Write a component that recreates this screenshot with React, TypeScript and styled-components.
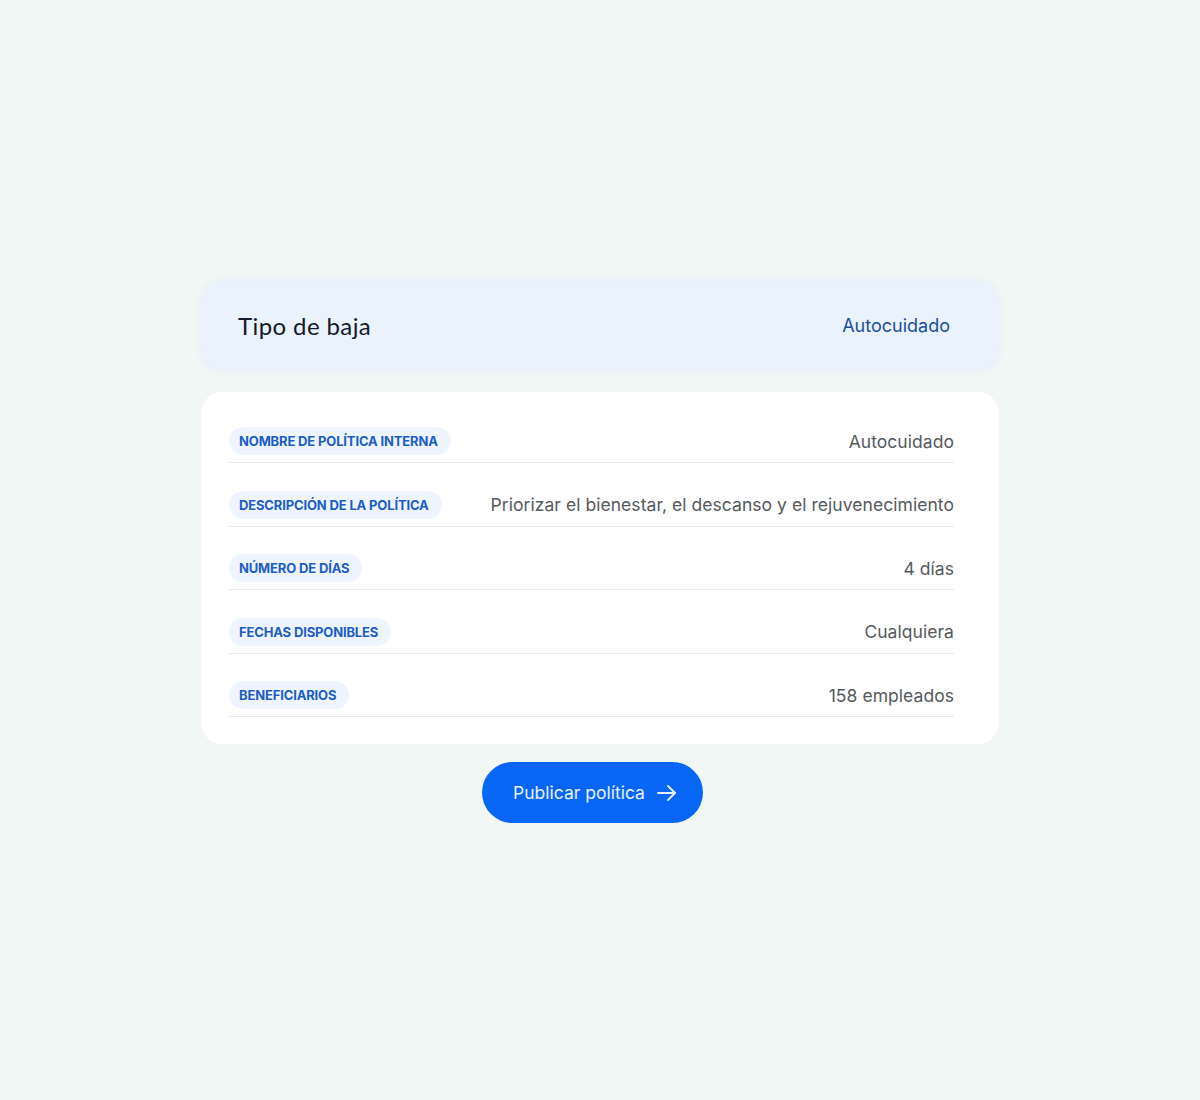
import React from "react";
import styled, { createGlobalStyle } from "styled-components";

const GlobalStyle = createGlobalStyle`
  html, body {
    margin: 0;
    padding: 0;
    background: #f1f7f5;
  }
  body {
    font-family: Inter, "Noto Sans", sans-serif;
  }
`;

const Page = styled.div`
  min-height: 1100px;
  display: flex;
  flex-direction: column;
  align-items: center;
  box-sizing: border-box;
  padding-top: 281px;
`;

const Stack = styled.div`
  width: 796px;
  display: flex;
  flex-direction: column;
  align-items: center;
`;

const Header = styled.div`
  width: 100%;
  height: 89px;
  box-sizing: border-box;
  background: #eaf2fd;
  border-radius: 20px;
  display: flex;
  align-items: center;
  justify-content: space-between;
  padding: 0 48px 0 36px;
  box-shadow: 0 0 6px rgba(220, 232, 250, 0.8);
`;

const Title = styled.h1`
  margin: 0;
  font-family: Lato, "Noto Sans", sans-serif;
  font-weight: 400;
  font-size: 24px;
  letter-spacing: 0.4px;
  color: #141a2b;
`;

const HeaderValue = styled.span`
  font-size: 18px;
  color: #1a4f9c;
`;

const Card = styled.div`
  width: 100%;
  box-sizing: border-box;
  margin-top: 22px;
  background: #ffffff;
  border-radius: 20px;
  padding: 7px 44px 27px 27px;
`;

const Row = styled.div`
  display: flex;
  align-items: center;
  justify-content: space-between;
  padding: 27.5px 0 7px;
  border-bottom: 1px solid #e6eaea;
  &:first-child {
    padding-top: 28px;
  }
`;

const Pill = styled.span`
  height: 28px;
  display: inline-flex;
  align-items: center;
  padding: 0 13px 0 10px;
  border-radius: 14px;
  background: #eff5fe;
  color: #1b5ec6;
  font-size: 13px;
  font-weight: 700;
  letter-spacing: -0.15px;
`;

const Value = styled.span`
  font-size: 17.5px;
  color: #545a5e;
  letter-spacing: 0.05px;
`;

const Button = styled.button`
  margin-top: 18px;
  margin-right: 15px;
  height: 61px;
  padding: 0 24px 0 31px;
  border: none;
  border-radius: 31px;
  background: #0766f6;
  color: #e8f1ff;
  font-family: Inter, "Noto Sans", sans-serif;
  font-size: 17.5px;
  display: flex;
  align-items: center;
  gap: 10px;
  cursor: pointer;
`;

const rows = [
  { label: "NOMBRE DE POLÍTICA INTERNA", value: "Autocuidado" },
  { label: "DESCRIPCIÓN DE LA POLÍTICA", value: "Priorizar el bienestar, el descanso y el rejuvenecimiento" },
  { label: "NÚMERO DE DÍAS", value: "4 días" },
  { label: "FECHAS DISPONIBLES", value: "Cualquiera" },
  { label: "BENEFICIARIOS", value: "158 empleados" },
];

const Arrow = () => (
  <svg width="24" height="24" viewBox="0 0 24 24" fill="none" stroke="currentColor" strokeWidth="1.8" strokeLinecap="round" strokeLinejoin="round">
    <path d="M3 12h17" />
    <path d="M13 5l7 7-7 7" />
  </svg>
);

export default function App() {
  return (
    <>
      <GlobalStyle />
      <Page>
        <Stack>
          <Header>
            <Title>Tipo de baja</Title>
            <HeaderValue>Autocuidado</HeaderValue>
          </Header>
          <Card>
            {rows.map((r) => (
              <Row key={r.label}>
                <Pill>{r.label}</Pill>
                <Value>{r.value}</Value>
              </Row>
            ))}
          </Card>
          <Button>
            Publicar política
            <Arrow />
          </Button>
        </Stack>
      </Page>
    </>
  );
}
